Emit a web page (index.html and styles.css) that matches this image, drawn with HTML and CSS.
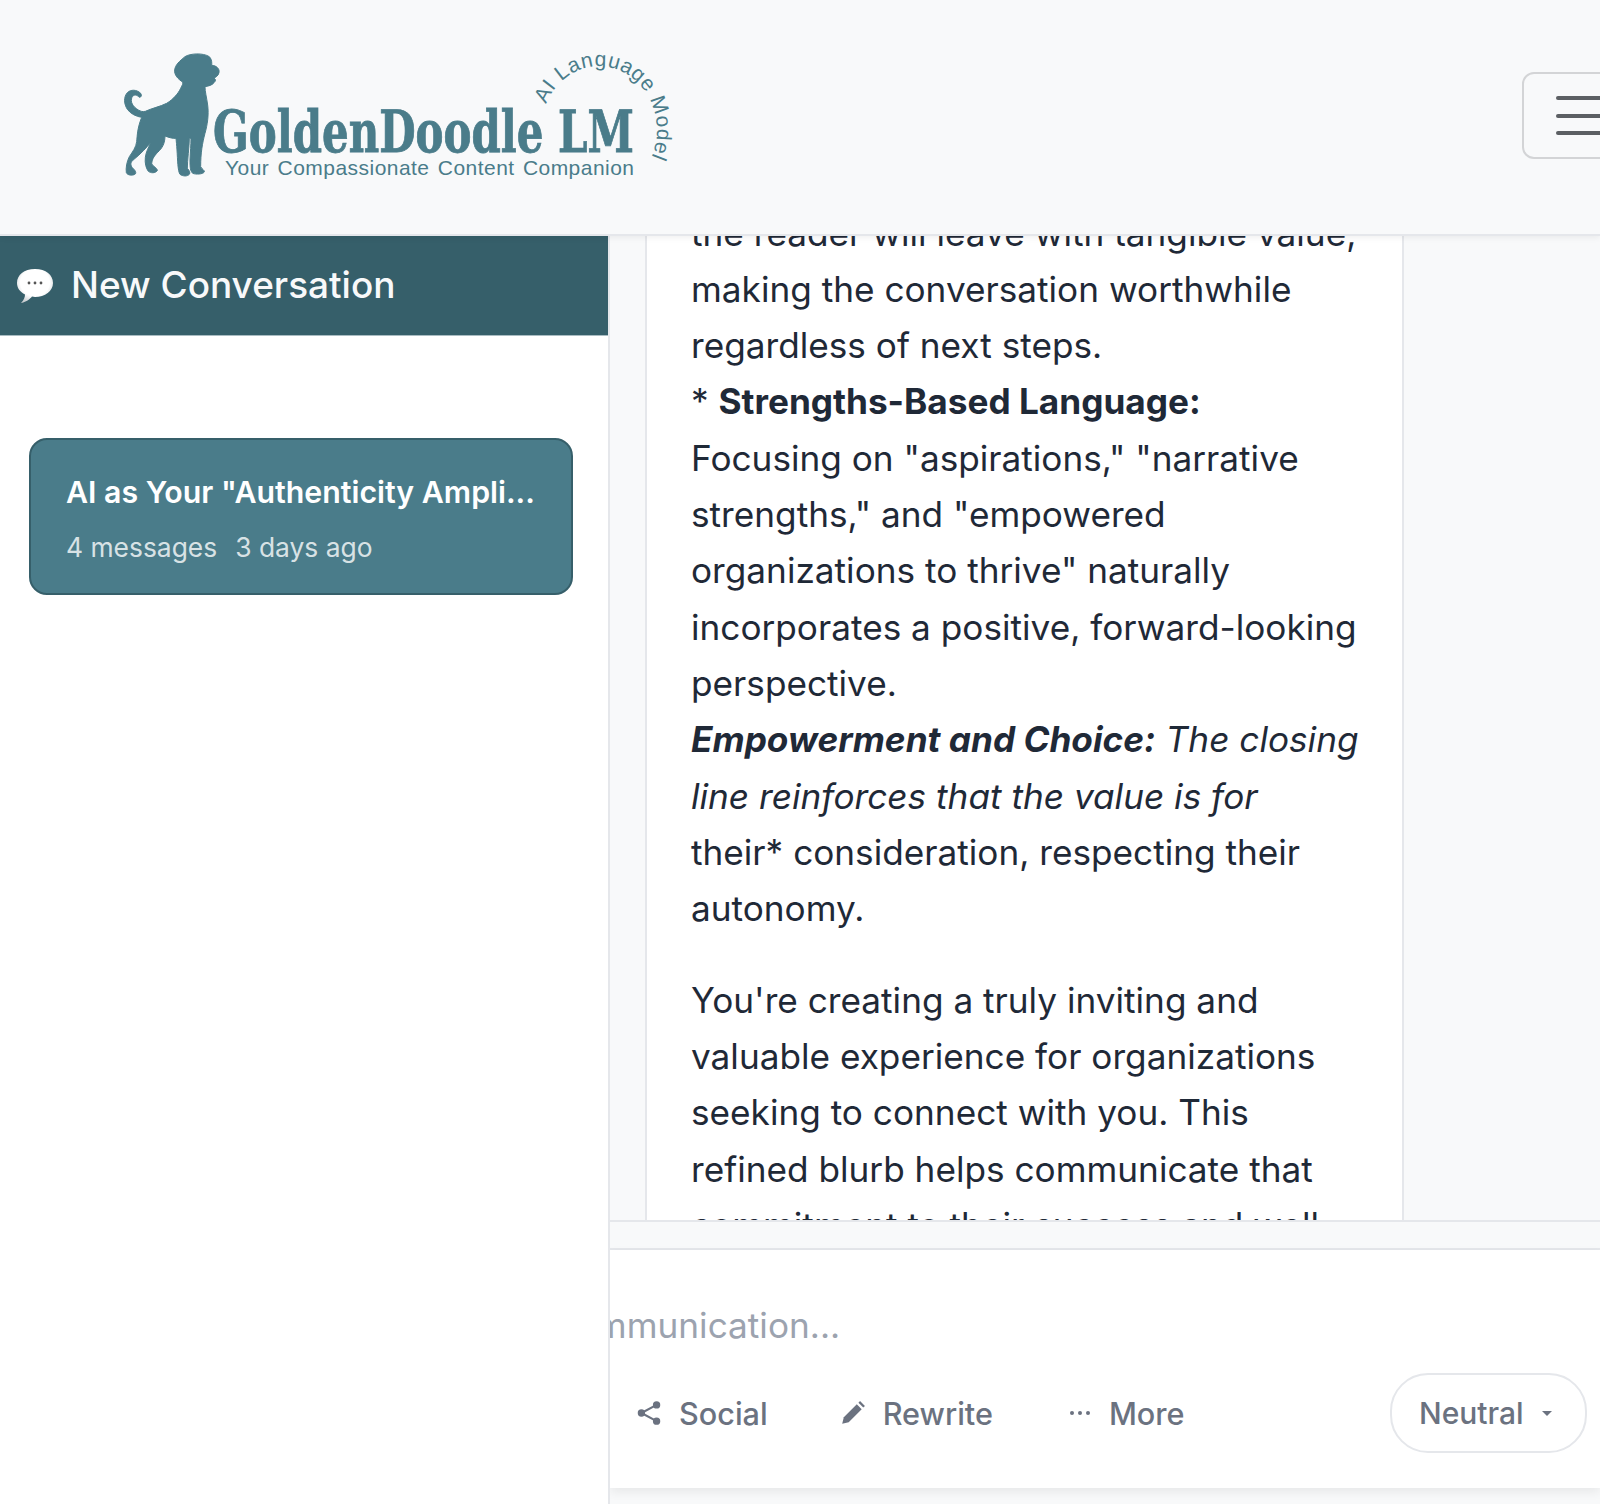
FILE: index.html
```html
<!DOCTYPE html>
<html lang="en">
<head>
  <meta charset="UTF-8">
  <title>GoldenDoodle LM</title>
  <meta name="viewport" content="width=device-width, initial-scale=1.0">
  <link rel="stylesheet" href="styles.css">
</head>
<body>
  <header class="top-bar">
    <a class="brand">
      <svg class="brand-art" width="570" height="150" viewBox="0 0 570 150">
        <!-- dog silhouette, drawn at 3x then scaled down -->
        <g transform="translate(0 -2) scale(0.3333)" fill="#4a7c8a" stroke="#4a7c8a" stroke-width="3" stroke-linejoin="round">
          <path d="M225 50 C240 40 280 38 298 50 C306 58 306 70 305 76 C318 76 330 86 327 98 C325 108 316 112 312 115 C318 118 318 122 312 128 C306 136 296 138 285 140 C285 155 290 172 293 195 C297 225 292 255 285 280 C277 310 272 340 272 380 C276 388 284 390 283 396 C278 403 258 404 248 400 C241 392 240 385 240 360 C241 335 243 315 243 295 L238 295 C238 320 232 360 232 385 C238 392 242 398 238 403 C232 410 218 409 210 403 C203 392 203 360 201 330 C200 315 199 305 198 295 C188 296 175 292 165 288 C165 305 160 320 148 332 C135 345 126 355 125 372 C132 380 143 386 142 392 C136 400 122 400 115 394 C108 385 104 370 106 352 C108 335 116 322 122 308 C110 322 92 342 72 358 C62 366 60 372 66 382 C74 390 80 396 76 402 C68 408 52 406 49 398 C47 385 50 365 58 350 C68 335 78 322 80 305 C82 285 82 265 95 232 C80 230 62 222 52 208 C42 192 40 172 52 158 C62 148 80 148 92 160 C96 166 94 172 88 172 C80 164 72 162 66 172 C60 185 68 200 85 210 C92 214 98 216 106 214 C125 205 150 200 170 190 C190 178 205 160 212 145 C217 135 220 130 218 126 C205 118 192 105 194 90 C196 74 208 64 225 50 Z"/>
        </g>
        <defs>
          <path id="arc-line" d="M436 62 A58 64 0 1 1 537 124"/>
        </defs>
        <text class="brand-arc"><textPath href="#arc-line" textLength="192">AI Language Model</textPath></text>
        <text class="brand-name" x="103" y="110" textLength="421" lengthAdjust="spacingAndGlyphs">GoldenDoodle LM</text>
        <text class="brand-tag" x="115" y="133" textLength="409" lengthAdjust="spacing">Your Compassionate Content Companion</text>
      </svg>
    </a>
    <button class="menu-btn" type="button" aria-label="Menu">
      <span class="menu-bars"></span>
      <span class="menu-bars"></span>
      <span class="menu-bars"></span>
    </button>
  </header>

  <div class="app-row">
    <aside class="sidebar">
      <button class="new-chat" type="button">
        <svg class="bubble-icon" width="38" height="38" viewBox="0 0 38 38">
          <defs>
            <radialGradient id="bubble-fill" cx="50%" cy="40%" r="62%">
              <stop offset="65%" stop-color="#ffffff"/>
              <stop offset="100%" stop-color="#c9cdd0"/>
            </radialGradient>
          </defs>
          <path d="M19 3 C30 3 37 9 37 17 C37 25 29 31 19 31 L16 30.5 C14 33 11 35.5 5 37 C8 34 9 31 9 28.5 C4 26 1 22 1 17 C1 9 8 3 19 3 Z" fill="url(#bubble-fill)"/>
          <circle cx="13" cy="17" r="1.4" fill="#555"/>
          <circle cx="19" cy="17" r="1.4" fill="#555"/>
          <circle cx="25" cy="17" r="1.4" fill="#555"/>
        </svg>
        <span>New Conversation</span>
      </button>
      <div class="chat-list">
        <div class="chat-item">
          <div class="chat-title">AI as Your "Authenticity Ampli...</div>
          <div class="chat-meta">
            <span>4 messages</span>
            <span>3 days ago</span>
          </div>
        </div>
      </div>
    </aside>

    <main class="main-col">
      <div class="messages">
        <div class="msg-card">
          <p>the reader will leave with tangible value, making the conversation worthwhile regardless of next steps.<br>
            * <strong>Strengths-Based Language:</strong> Focusing on "aspirations," "narrative strengths," and "empowered organizations to thrive" naturally incorporates a positive, forward-looking perspective.<br>
            <em class="tight-line"><strong>Empowerment and Choice:</strong> The closing</em><br>
            <em>line reinforces that the value is for</em><br>
            their* consideration, respecting their autonomy.</p>
          <p>You're creating a truly inviting and valuable experience for organizations seeking to connect with you. This refined blurb helps communicate that commitment to their success and well-being.</p>
        </div>
      </div>
      <div class="strip"></div>
      <div class="composer">
        <div class="placeholder">Ask anything about compassionate communication...</div>
        <div class="tool-row">
          <button class="tool-btn" type="button">
            <svg class="tool-icon" width="26" height="26" viewBox="0 0 24 24" fill="none" stroke="#6b7280" stroke-width="2"><path d="M19 4.500 5 12l14 7.500"/><circle cx="19" cy="4.500" r="2.400" fill="#6b7280"/><circle cx="5" cy="12" r="2.400" fill="#6b7280"/><circle cx="19" cy="19.500" r="2.400" fill="#6b7280"/></svg>
            <span>Social</span>
          </button>
          <button class="tool-btn tool-rewrite" type="button">
            <svg class="tool-icon" width="26" height="26" viewBox="0 0 24 24" fill="#6b7280"><path d="M2 22l1.5-6L15.5 4l4.5 4.5L8 20.500z"/><path d="M17 2.500 18.500 1l4.500 4.500L21.500 7z"/></svg>
            <span>Rewrite</span>
          </button>
          <button class="tool-btn" type="button">
            <svg class="tool-icon" width="24" height="26" viewBox="0 0 24 26" fill="#6b7280"><circle cx="4" cy="13" r="2"/><circle cx="12" cy="13" r="2"/><circle cx="20" cy="13" r="2"/></svg>
            <span>More</span>
          </button>
          <button class="tone-btn" type="button">
            <span>Neutral</span>
            <span class="caret"></span>
          </button>
        </div>
      </div>
      <div class="foot-strip"></div>
    </main>
  </div>
</body>
</html>
```

FILE: styles.css
```css
* {
  box-sizing: border-box;
}

html, body {
  margin: 0;
  height: 100%;
  overflow: hidden;
}

body {
  display: flex;
  flex-direction: column;
  background: #f8f9fa;
  font-family: Inter, 'Noto Sans', Arial, sans-serif;
  color: #1f2937;
}

button {
  font-family: inherit;
  cursor: pointer;
}

/* header */
.top-bar {
  flex: 0 0 236px;
  display: flex;
  align-items: flex-start;
  background: #f8f9fa;
  border-bottom: 2px solid #e5e7eb;
  box-shadow: 0 2px 6px rgba(0,0,0,0.06);
  overflow: hidden;
  position: relative;
  z-index: 2;
}

.brand {
  display: block;
  flex: 0 0 auto;
  margin: 42px 0 0 110px;
}

.brand-art {
  display: block;
}

.brand-name {
  font-family: 'DejaVu Serif', serif;
  font-stretch: condensed;
  font-weight: 700;
  font-size: 57px;
  fill: #4a7c8a;
  stroke: #4a7c8a;
  stroke-width: 0.8px;
}

.brand-tag {
  font-family: 'Liberation Sans', Arial, sans-serif;
  font-size: 21px;
  word-spacing: 2px;
  fill: #4a7c8a;
}

.brand-arc {
  font-family: 'Liberation Sans', Arial, sans-serif;
  font-size: 21px;
  fill: #4a7c8a;
}

.menu-btn {
  flex: 0 0 112px;
  height: 87px;
  margin: 72px 0 0 842px;
  padding: 0 0 0 32px;
  display: flex;
  flex-direction: column;
  justify-content: center;
  gap: 13.500px;
  background: none;
  border: 2px solid #d3d4d6;
  border-radius: 12px;
}

.menu-bars {
  display: block;
  width: 60px;
  height: 4px;
  border-radius: 2px;
  background: #5c5f63;
}

/* layout below header */
.app-row {
  flex: 1;
  min-height: 0;
  display: flex;
}

.sidebar {
  flex: 0 0 610px;
  min-width: 0;
  background: #fff;
  border-right: 2px solid #e5e7eb;
}

.new-chat {
  width: 100%;
  height: 100px;
  display: flex;
  align-items: center;
  gap: 17px;
  padding: 0 0 2px 16px;
  background: #365f6a;
  border: none;
  border-bottom: 1px solid #a9bcc2;
  color: #f8f9fa;
  font-size: 36.960px;
  font-weight: 500;
}

.bubble-icon {
  flex: none;
}

.chat-list {
  padding: 102px 35px 0 29px;
}

.chat-item {
  height: 157px;
  padding: 30px 35px 0;
  background: #4a7c8a;
  border: 2px solid #365f6a;
  border-radius: 18px;
  color: #fff;
}

.chat-title {
  font-size: 30.300px;
  font-weight: 600;
  line-height: 44px;
  white-space: nowrap;
}

.chat-meta {
  display: flex;
  gap: 18px;
  margin-top: 13px;
  font-size: 26.400px;
  line-height: 40px;
  color: rgba(255,255,255,0.8);
}

/* main column */
.main-col {
  flex: 1;
  min-width: 0;
  display: flex;
  flex-direction: column;
  overflow: hidden;
}

.messages {
  flex: 0 0 986px;
  padding: 0 196px 0 35px;
  overflow: hidden;
  border-bottom: 2px solid #e5e7eb;
}

.msg-card {
  margin-top: -31.500px;
  padding: 0 44px;
  background: #fff;
  border: 2px solid #e5e7eb;
  border-width: 0 2px;
  font-size: 35.200px;
  line-height: 56.320px;
}

.msg-card p {
  margin: 0 0 35.200px;
}

.tight-line {
  white-space: nowrap;
}

.strip {
  flex: 0 0 28px;
  background: #f8f9fa;
  border-bottom: 2px solid #e5e7eb;
}

.composer {
  flex: 0 0 238px;
  padding: 47px 13px 0 0;
  background: #fff;
  box-shadow: 0 4px 10px rgba(0,0,0,0.07);
}

.placeholder {
  height: 56px;
  margin-left: -648px;
  font-size: 35.200px;
  line-height: 56px;
  color: #9ca3af;
  white-space: nowrap;
}

.tool-row {
  display: flex;
  align-items: center;
  margin-top: 20px;
  padding-left: 26px;
}

.tool-btn {
  display: flex;
  align-items: center;
  gap: 17px;
  margin-right: 72px;
  padding: 0;
  background: none;
  border: none;
  color: #6b7280;
  font-size: 30.600px;
  font-weight: 500;
}

.tool-rewrite {
  margin-right: 75px;
}

.tone-btn {
  margin-left: auto;
  width: 197px;
  height: 80px;
  display: flex;
  align-items: center;
  gap: 18px;
  padding: 0 0 0 27px;
  background: #fff;
  border: 2px solid #e5e7eb;
  border-radius: 38px;
  color: #6b7280;
  font-size: 30px;
  font-weight: 500;
}

.caret {
  width: 0;
  height: 0;
  border-left: 5.500px solid transparent;
  border-right: 5.500px solid transparent;
  border-top: 5.500px solid #6b7280;
}

.foot-strip {
  flex: 1;
}
```
